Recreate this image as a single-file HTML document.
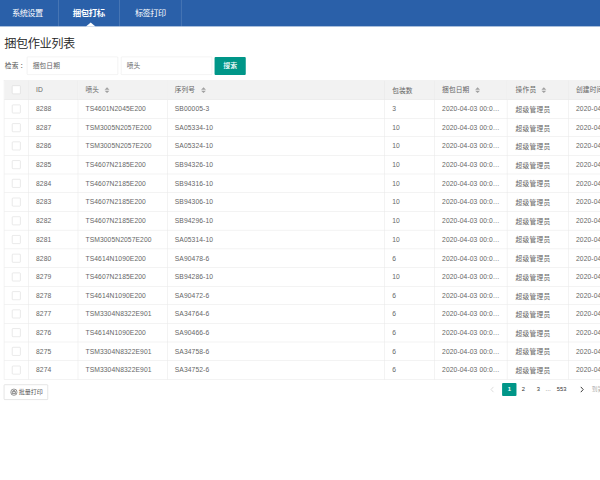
<!DOCTYPE html><html lang="zh-CN"><head><meta charset="utf-8"><title>捆包作业列表</title><style>
*{box-sizing:border-box;margin:0;padding:0}
html,body{width:600px;height:480px;overflow:hidden;background:#fff}
body{font-family:"Liberation Sans","Noto Sans CJK SC",sans-serif;color:#666;position:relative}
#w{position:absolute;left:0;top:0;width:1250px;height:1000px;transform:scale(.48);transform-origin:0 0;overflow:hidden;background:#fff;font-size:14px}
.nav{position:absolute;left:0;top:0;width:1250px;height:55px;background:#2a60a9}
.tab{position:absolute;top:0;height:55px;width:128px;border-right:1px solid rgba(255,255,255,.28);color:#fff;font-size:17px;letter-spacing:-1px;text-indent:-1px;line-height:55px;text-align:center}
.tab.on{font-weight:bold;font-size:17.6px}
.tri{position:absolute;left:50%;bottom:0;margin-left:-7px;width:0;height:0;border:10px solid transparent;border-top:none;border-bottom:8px solid #fff}
h2{position:absolute;left:9px;top:70px;font-size:25.6px;letter-spacing:-1.1px;line-height:40px;font-weight:350;color:#222}
.lbl{position:absolute;left:10px;letter-spacing:.4px;top:118px;line-height:38px;font-size:14px;color:#555}
.inp{position:absolute;top:118px;height:38px;width:190px;border:1px solid #e6e6e6;border-radius:2px;line-height:36px;padding-left:11px;color:#666;letter-spacing:.3px;font-size:14px;background:#fff}
.btn{position:absolute;left:447px;top:119px;width:65px;height:37px;background:#009688;color:#fff;border-radius:2px;text-align:center;line-height:37px;font-size:14.4px;font-weight:500}
table{position:absolute;left:8px;top:167.3px;border-collapse:separate;border-spacing:0;table-layout:fixed;width:1400px;border-left:1px solid #e6e6e6;border-top:1px solid #e6e6e6}
th,td{border-right:1px solid #e6e6e6;border-bottom:1px solid #e6e6e6;height:38.9px;padding:0 15px;font-size:14px;letter-spacing:.2px;font-weight:normal;text-align:left;white-space:nowrap;overflow:hidden;color:#666;vertical-align:middle}
th{background:#f2f2f2;height:39.4px}
td.d{text-overflow:ellipsis}
.cb{display:block;width:18px;height:18px;border:1px solid #d2d2d2;border-radius:2px;background:#fff;margin:0 auto}
th.c,td.c{padding:0}
.jp{position:relative;left:3px}
th.o,td.o{padding-left:17px;letter-spacing:.6px}
th.o .sort{margin-left:10px}
.sort{display:inline-block;position:relative;width:10px;height:20px;margin-left:12px;vertical-align:middle}
.sort:before,.sort:after{content:"";position:absolute;left:0;border:5px solid transparent}
.sort:before{top:3px;border-top:none;border-bottom-color:#a0a0a0}
.sort:after{bottom:5px;border-bottom:none;border-top-color:#a0a0a0}
.pbtn{position:absolute;left:8px;top:801px;width:91.5px;height:32px;border:1px solid #c9c9c9;border-radius:2px;font-size:12.6px;line-height:31px;color:#555;padding-left:30px;background:#fff}
.pbtn svg{position:absolute;left:12px;top:7px}
.pg{white-space:nowrap;position:absolute;top:798px;height:26px;line-height:26px;font-size:12px;color:#333}
.pg.cur{background:#009688;color:#fff;border-radius:2px;text-align:center;font-weight:bold;height:26.5px}
</style></head><body><div id="w">
<div class="nav">
<div class="tab" style="left:-6px">系统设置</div>
<div class="tab on" style="left:122px">捆包打标<i class="tri"></i></div>
<div class="tab" style="left:250px">标签打印</div>
</div>
<h2>捆包作业列表</h2>
<div class="lbl">检索<span class="jp">：</span></div>
<div class="inp" style="left:56px">捆包日期</div>
<div class="inp" style="left:252px">喷头</div>
<div class="btn">搜索</div>
<table><colgroup><col style="width:51px"><col style="width:103px"><col style="width:186px"><col style="width:453px"><col style="width:104px"><col style="width:151px"><col style="width:128px"><col style="width:223px"></colgroup>
<tr><th class="c"><i class="cb"></i></th><th>ID</th><th>喷头<i class="sort"></i></th><th>序列号<i class="sort"></i></th><th>包装数</th><th>捆包日期<i class="sort"></i></th><th class="o">操作员<i class="sort"></i></th><th>创建时间<i class="sort"></i></th></tr>
<tr><td class="c"><i class="cb"></i></td><td>8288</td><td>TS4601N2045E200</td><td>SB00005-3</td><td>3</td><td class="d">2020-04-03 00:00:00</td><td class="o">超级管理员</td><td>2020-04-03 14:24:44</td></tr>
<tr><td class="c"><i class="cb"></i></td><td>8287</td><td>TSM3005N2057E200</td><td>SA05334-10</td><td>10</td><td class="d">2020-04-03 00:00:00</td><td class="o">超级管理员</td><td>2020-04-03 14:24:44</td></tr>
<tr><td class="c"><i class="cb"></i></td><td>8286</td><td>TSM3005N2057E200</td><td>SA05324-10</td><td>10</td><td class="d">2020-04-03 00:00:00</td><td class="o">超级管理员</td><td>2020-04-03 14:24:44</td></tr>
<tr><td class="c"><i class="cb"></i></td><td>8285</td><td>TS4607N2185E200</td><td>SB94326-10</td><td>10</td><td class="d">2020-04-03 00:00:00</td><td class="o">超级管理员</td><td>2020-04-03 14:24:44</td></tr>
<tr><td class="c"><i class="cb"></i></td><td>8284</td><td>TS4607N2185E200</td><td>SB94316-10</td><td>10</td><td class="d">2020-04-03 00:00:00</td><td class="o">超级管理员</td><td>2020-04-03 14:24:44</td></tr>
<tr><td class="c"><i class="cb"></i></td><td>8283</td><td>TS4607N2185E200</td><td>SB94306-10</td><td>10</td><td class="d">2020-04-03 00:00:00</td><td class="o">超级管理员</td><td>2020-04-03 14:24:44</td></tr>
<tr><td class="c"><i class="cb"></i></td><td>8282</td><td>TS4607N2185E200</td><td>SB94296-10</td><td>10</td><td class="d">2020-04-03 00:00:00</td><td class="o">超级管理员</td><td>2020-04-03 14:24:44</td></tr>
<tr><td class="c"><i class="cb"></i></td><td>8281</td><td>TSM3005N2057E200</td><td>SA05314-10</td><td>10</td><td class="d">2020-04-03 00:00:00</td><td class="o">超级管理员</td><td>2020-04-03 14:24:44</td></tr>
<tr><td class="c"><i class="cb"></i></td><td>8280</td><td>TS4614N1090E200</td><td>SA90478-6</td><td>6</td><td class="d">2020-04-03 00:00:00</td><td class="o">超级管理员</td><td>2020-04-03 14:24:44</td></tr>
<tr><td class="c"><i class="cb"></i></td><td>8279</td><td>TS4607N2185E200</td><td>SB94286-10</td><td>10</td><td class="d">2020-04-03 00:00:00</td><td class="o">超级管理员</td><td>2020-04-03 14:24:44</td></tr>
<tr><td class="c"><i class="cb"></i></td><td>8278</td><td>TS4614N1090E200</td><td>SA90472-6</td><td>6</td><td class="d">2020-04-03 00:00:00</td><td class="o">超级管理员</td><td>2020-04-03 14:24:44</td></tr>
<tr><td class="c"><i class="cb"></i></td><td>8277</td><td>TSM3304N8322E901</td><td>SA34764-6</td><td>6</td><td class="d">2020-04-03 00:00:00</td><td class="o">超级管理员</td><td>2020-04-03 14:24:44</td></tr>
<tr><td class="c"><i class="cb"></i></td><td>8276</td><td>TS4614N1090E200</td><td>SA90466-6</td><td>6</td><td class="d">2020-04-03 00:00:00</td><td class="o">超级管理员</td><td>2020-04-03 14:24:44</td></tr>
<tr><td class="c"><i class="cb"></i></td><td>8275</td><td>TSM3304N8322E901</td><td>SA34758-6</td><td>6</td><td class="d">2020-04-03 00:00:00</td><td class="o">超级管理员</td><td>2020-04-03 14:24:44</td></tr>
<tr><td class="c"><i class="cb"></i></td><td>8274</td><td>TSM3304N8322E901</td><td>SA34752-6</td><td>6</td><td class="d">2020-04-03 00:00:00</td><td class="o">超级管理员</td><td>2020-04-03 14:24:44</td></tr>
</table>
<div class="pbtn"><svg width="16" height="16" viewBox="0 0 16 16" fill="none" stroke="#555" stroke-width="1.3"><circle cx="8" cy="8" r="6.6"/><path d="M4.5 7.2h7v3.6h-7z M6 7.2V4.8h4v2.4"/></svg>批量打印</div>
<div class="pg" style="left:1020px;color:#d2d2d2"><svg width="12" height="26" viewBox="0 0 12 26" fill="none" stroke="#d2d2d2" stroke-width="1.6"><path d="M8 8 L3 13.5 L8 19"/></svg></div>
<div class="pg cur" style="left:1046px;width:30px">1</div>
<div class="pg" style="left:1087px">2</div>
<div class="pg" style="left:1118px">3</div>
<div class="pg" style="left:1136px;color:#444">…</div>
<div class="pg" style="left:1160px">553</div>
<div class="pg" style="left:1207px"><svg width="12" height="26" viewBox="0 0 12 26" fill="none" stroke="#333" stroke-width="2"><path d="M3 8 L8 13.5 L3 19"/></svg></div>
<div class="pg" style="left:1233px;color:#aaa">到第</div>
</div></body></html>
